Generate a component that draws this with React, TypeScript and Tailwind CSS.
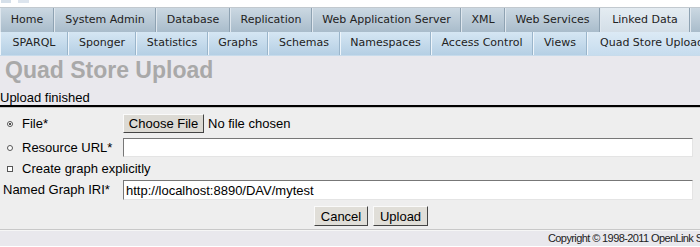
const topTabs = [
  { label: 'Home', w: 'w-[54px]' },
  { label: 'System Admin', w: 'w-[102px]' },
  { label: 'Database', w: 'w-[74px]' },
  { label: 'Replication', w: 'w-[82px]' },
  { label: 'Web Application Server', w: 'w-[149px]' },
  { label: 'XML', w: 'w-[44px]' },
  { label: 'Web Services', w: 'w-[95px]' },
  { label: 'Linked Data', w: 'w-[90px]', active: true },
  { label: 'Server Logs', w: 'w-[130px]' },
];

const subTabs = [
  { label: 'SPARQL', w: 'w-[68px]' },
  { label: 'Sponger', w: 'w-[68px]' },
  { label: 'Statistics', w: 'w-[72px]' },
  { label: 'Graphs', w: 'w-[60px]' },
  { label: 'Schemas', w: 'w-[72px]' },
  { label: 'Namespaces', w: 'w-[91px]' },
  { label: 'Access Control', w: 'w-[102px]' },
  { label: 'Views', w: 'w-[54px]' },
  { label: 'Quad Store Upload', w: 'w-[130px]', active: true },
];

function Radio({ checked }: { checked?: boolean }) {
  return (
    <span className="w-[6px] h-[6px] rounded-full border border-[#555] bg-white flex items-center justify-center shrink-0">
      {checked && <span className="w-[2px] h-[2px] rounded-full bg-[#111]" />}
    </span>
  );
}

function Btn({ children, w }: { children: string; w: string }) {
  return (
    <button
      className={`${w} h-[20px] bg-[#e0ded8] border border-t-[#fafafa] border-l-[#fafafa] border-b-[#444] border-r-[#444] text-[13px] leading-none text-black flex items-center justify-center`}
    >
      {children}
    </button>
  );
}

export default function App() {
  return (
    <div className="w-[700px] h-[247px] overflow-hidden bg-white font-['Liberation_Sans',Arial,sans-serif] text-black">
      <div className="h-[7px] flex gap-[7px] pl-[1px]">
        <span className="w-[10px] h-[3px] bg-[#d6e0ea]" />
        <span className="w-[11px] h-[3px] bg-[#dde5ee]" />
      </div>

      {/* main menu */}
      <div className="flex h-[25px] border-t border-[#c2c9cf] whitespace-nowrap font-['DejaVu_Sans',Verdana,sans-serif] text-[11px] text-[#222]">
        {topTabs.map((t) => (
          <div
            key={t.label}
            className={`${t.w} shrink-0 flex items-center justify-center border-l border-l-[#dfe7ee] border-r border-r-[#8ea2b2] ${
              t.active
                ? 'bg-gradient-to-b from-[#e4ecf2] to-[#d3dee7]'
                : 'bg-gradient-to-b from-[#cbd8e2] to-[#a9bccb]'
            }`}
          >
            {t.label}
          </div>
        ))}
      </div>

      {/* sub menu */}
      <div className="flex h-[24px] whitespace-nowrap font-['DejaVu_Sans',Verdana,sans-serif] text-[11px] text-[#222] border-b border-[#c7dbeb]">
        {subTabs.map((t) => (
          <div
            key={t.label}
            className={`${t.w} shrink-0 flex items-center justify-center border-l border-l-[#eef5fb] border-r border-r-[#9ab5cb] ${
              t.active
                ? 'bg-gradient-to-b from-[#dceaf5] to-[#c6dcee]'
                : 'bg-gradient-to-b from-[#d5e6f3] to-[#b5cfe4]'
            }`}
          >
            {t.label}
          </div>
        ))}
      </div>

      <div className="h-[49px] bg-[#e9e8ed] pt-[1px]">
        <h1 className="pl-[5px] text-[23px] leading-[26px] font-bold text-[#a9a9a9]">Quad Store Upload</h1>
        <div className="mt-[7px] text-[13px] leading-[15px]">Upload finished</div>
      </div>
      <div className="h-[2px] bg-black" />
      <div className="h-[1px] bg-[#c4c4c4]" />

      <div className="h-[121px] bg-[#eeeeee] pt-[6px] text-[13px]">
        <div className="flex items-center h-[19px]">
          <div className="w-[123px] flex items-center pl-[7px] gap-[9px]">
            <Radio checked />
            <span>File*</span>
          </div>
          <button className="w-[81px] h-[19px] bg-[#dcdad4] border border-t-[#fafafa] border-l-[#fafafa] border-b-[#444] border-r-[#444] text-[13px] leading-none flex items-center justify-center">
            Choose File
          </button>
          <span className="ml-[4px]">No file chosen</span>
        </div>

        <div className="flex items-center h-[19px] mt-[5px]">
          <div className="w-[123px] flex items-center pl-[7px] gap-[9px]">
            <Radio />
            <span>Resource URL*</span>
          </div>
          <input
            type="text"
            className="w-[570px] h-[19px] bg-white border border-t-[#777] border-l-[#777] border-b-[#e4e4e4] border-r-[#e4e4e4] outline-none px-[2px]"
          />
        </div>

        <div className="flex items-center h-[16px] mt-[4px] pl-[7px] gap-[9px]">
          <span className="w-[6px] h-[6px] border border-[#555] bg-white shrink-0" />
          <span>Create graph explicitly</span>
        </div>

        <div className="flex items-center h-[20px] mt-[3px]">
          <div className="w-[123px] pl-[3px]">Named Graph IRI*</div>
          <input
            type="text"
            defaultValue="http://localhost:8890/DAV/mytest"
            className="w-[570px] h-[20px] bg-white border border-t-[#777] border-l-[#777] border-b-[#e4e4e4] border-r-[#e4e4e4] outline-none px-[2px] text-[13px]"
          />
        </div>

        <div className="flex h-[20px] mt-[6px] pl-[314px] gap-[5px]">
          <Btn w="w-[54px]">Cancel</Btn>
          <Btn w="w-[55px]">Upload</Btn>
        </div>
      </div>

      <div className="h-[1px] bg-[#c8c8c8]" />
      <div className="h-[1px] bg-[#f6f6f6]" />
      <div className="h-[15px] bg-[#e9e8ed] pl-[548px] whitespace-nowrap text-[11px] leading-[15px] tracking-[-0.6px] text-[#222]">
        Copyright © 1998-2011 OpenLink Software
      </div>
    </div>
  );
}
